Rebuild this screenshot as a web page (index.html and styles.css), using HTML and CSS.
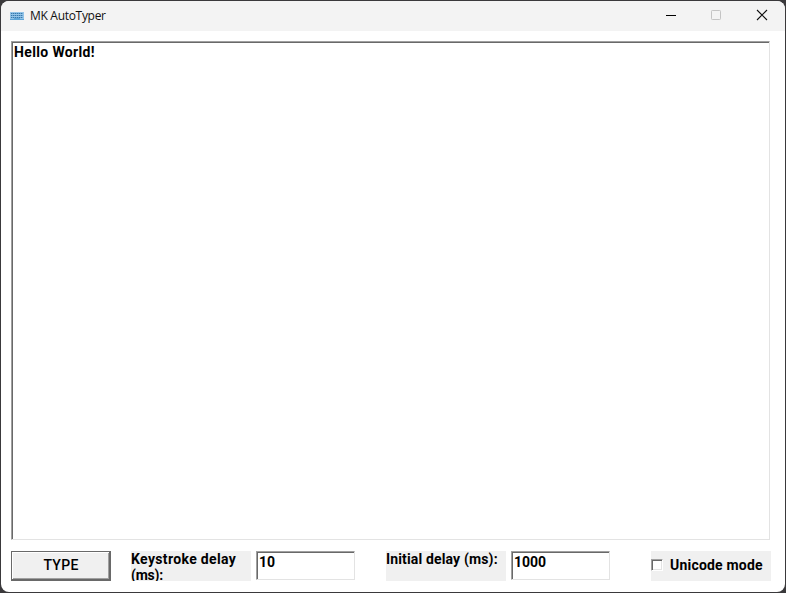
FILE: index.html
```
<!DOCTYPE html>
<html lang="en">
<head>
<meta charset="utf-8">
<title>MK AutoTyper</title>
<link rel="stylesheet" href="styles.css">
</head>
<body>
<main class="window">
  <header class="titlebar">
    <svg class="app-icon" width="14" height="8" viewBox="0 0 14 8">
      <rect width="14" height="8" fill="#94c4e8"/>
      <path d="M1 1.5h12M1 3.5h12M1 5.5h12" stroke="#3579ad" stroke-width="1" stroke-dasharray="1.4 .6"/>
      <path d="M0 7.5h14M4 6.5h6" stroke="#5fa6d8"/>
    </svg>
    <h1 class="title">MK AutoTyper</h1>
    <nav class="controls">
      <svg width="10" height="10" viewBox="0 0 10 10"><path d="M0 5.5h10" stroke="#000"/></svg>
      <svg width="10" height="10" viewBox="0 0 10 10"><rect x=".5" y=".5" width="9" height="9" rx=".8" fill="none" stroke="#c4c4c4"/></svg>
      <svg class="close" width="10" height="10" viewBox="0 0 10 10"><path d="M0 0l10 10M10 0L0 10" stroke="#111" stroke-width="1.1"/></svg>
    </nav>
  </header>
  <section class="content">
    <div class="field editor"><span class="t-hello">Hello World!</span></div>
    <div class="toolbar">
      <button class="type-button"><span>TYPE</span></button>
      <div class="label keystroke"><span class="t-key">Keystroke delay</span><br><span class="t-ms">(ms):</span></div>
      <div class="field small"><span>10</span></div>
      <div class="label initial"><span class="t-initial">Initial delay (ms):</span></div>
      <div class="field small"><span>1000</span></div>
      <div class="label check"><i class="box"></i><span class="t-uni">Unicode mode</span></div>
    </div>
  </section>
</main>
</body>
</html>
```
FILE: styles.css
```
* { box-sizing: border-box; }
body {
  margin: 0;
  width: 786px;
  height: 593px;
  padding: 1px;
  overflow: hidden;
  background: #3a393b;
  font: bold 14px/16px Roboto, "Liberation Sans", sans-serif;
  color: #000;
}
.window {
  width: 784px;
  height: 591px;
  border-radius: 8px;
  overflow: hidden;
  background: #fff;
}
.titlebar {
  display: flex;
  align-items: center;
  height: 30px;
  padding: 0 18px 0 9px;
  background: #f3f3f3;
}
.title {
  margin: 0 auto 0 6px;
  font: 12px/16px "Open Sans", "Noto Sans", sans-serif;
  letter-spacing: -.3px;
  color: #111;
}
.controls { display: flex; gap: 35px; margin-top: -2px; }
.controls svg { overflow: visible; }
.controls .close { margin-left: 1px; }
.content { padding: 10px 14px 0 10px; }
.field {
  border: 1px solid;
  border-color: #a0a0a0 #e3e3e3 #e3e3e3 #a0a0a0;
  box-shadow: inset 1px 1px #696969;
  background: #fff;
  padding: 2px 0 0 2px;
  white-space: nowrap;
}
.editor { width: 759px; height: 499px; }
.toolbar { display: flex; margin-top: 11px; }
.type-button {
  width: 100px;
  height: 30px;
  padding: 0 0 2px;
  border: 1px solid #696969;
  box-shadow: inset -1px -1px #696969, inset 1px 1px #fff, inset -2px -2px #a0a0a0;
  background: #f0f0f0;
  font: 500 14px/16px Roboto, "Liberation Sans", sans-serif;
  letter-spacing: .3px;
  color: #000;
}
.label {
  width: 120px;
  height: 30px;
  overflow: hidden;
  background: #f0f0f0;
  white-space: nowrap;
}
.t-hello { letter-spacing: .36px; }
.t-key { letter-spacing: .35px; }
.t-ms { letter-spacing: -.2px; }
.t-initial { letter-spacing: .15px; }
.t-uni { letter-spacing: .2px; }
.keystroke { margin-left: 20px; }
.initial { margin-left: 31px; }
.small { width: 99px; height: 29px; margin-left: 5px; }
.check {
  display: flex;
  align-items: center;
  margin-left: 41px;
  padding-bottom: 2px;
}
.box {
  width: 12px;
  height: 12px;
  margin-right: 7px;
  border: 1px solid;
  border-color: #a0a0a0 #fff #fff #a0a0a0;
  box-shadow: inset 1px 1px #696969, inset -1px -1px #e3e3e3;
  background: #fff;
}
```
